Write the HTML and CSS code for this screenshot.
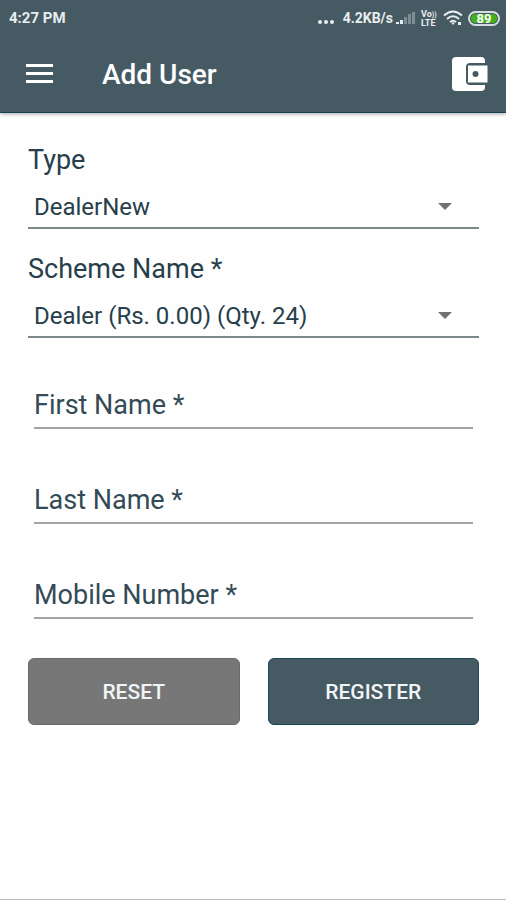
FILE: index.html
```html
<!DOCTYPE html>
<html lang="en">
<head>
<meta charset="utf-8">
<meta name="viewport" content="width=device-width, initial-scale=1">
<title>Add User</title>
<link rel="stylesheet" href="styles.css">
</head>
<body>
<header class="header">
  <div class="status">
    <span class="time">4:27 PM</span>
    <div class="indicators">
      <svg class="dots" width="18" height="16" viewBox="0 0 18 16" fill="currentColor" aria-hidden="true"><circle cx="3" cy="12" r="2"/><circle cx="9" cy="12" r="2"/><circle cx="15" cy="12" r="2"/></svg>
      <span class="speed">4.2KB/s</span>
      <svg class="signal" width="19" height="14" viewBox="0 0 19 14" fill="currentColor" aria-hidden="true"><path d="M0 11h3v2H0zM4 9h3v4H4z"/><path opacity=".35" d="M8 6h3v7H8zM12 3h3v10h-3zM16 1h3v12h-3z"/></svg>
      <span class="volte"><span>Vo<small>))</small></span><span>LTE</span></span>
      <svg class="wifi" width="20" height="16" viewBox="0 0 20 16" fill="none" stroke="currentColor" stroke-width="2" aria-hidden="true"><path d="M1 5.500Q10-2.500 19 5.500M4 9Q10 3.500 16 9M7 12Q10 9.500 13 12"/><path fill="currentColor" stroke="none" d="M8 12.500h4L10 15zM15 12h3v3h-3z"/></svg>
      <span class="battery">89</span>
    </div>
  </div>
  <div class="toolbar">
    <button class="icon-button" type="button" aria-label="Menu">
      <svg width="27" height="20" viewBox="0 0 27 20" fill="currentColor"><path d="M0 0h27v3H0zM0 8h27v3H0zM0 16h27v3H0z"/></svg>
    </button>
    <h1 class="title">Add User</h1>
    <button class="icon-button" type="button" aria-label="Wallet">
      <svg width="36" height="34" viewBox="0 0 36 34" fill="currentColor"><path d="M4 0H29Q33 0 33 4V6H18Q14 6 14 10V24Q14 28 18 28H33V30Q33 34 29 34H4Q0 34 0 30V4Q0 0 4 0Z"/><path fill-rule="evenodd" d="M16 8.500H35.500V25.500H16ZM23.500 14a3 3 0 1 0 0 6a3 3 0 1 0 0-6Z"/></svg>
    </button>
  </div>
</header>
<main class="main">
  <form class="form">
    <div class="field">
      <label class="label" for="type">Type</label>
      <div class="select-box">
        <select class="select" id="type"><option>DealerNew</option></select>
      </div>
    </div>
    <div class="field">
      <label class="label" for="scheme">Scheme Name *</label>
      <div class="select-box">
        <select class="select" id="scheme"><option>Dealer (Rs. 0.00) (Qty. 24)</option></select>
      </div>
    </div>
    <div class="inputs">
      <input class="input" type="text" placeholder="First Name *" aria-label="First Name">
      <input class="input" type="text" placeholder="Last Name *" aria-label="Last Name">
      <input class="input" type="tel" placeholder="Mobile Number *" aria-label="Mobile Number">
    </div>
    <div class="actions">
      <button class="button button-reset" type="reset">RESET</button>
      <button class="button button-register" type="button">REGISTER</button>
    </div>
  </form>
</main>
</body>
</html>
```
FILE: styles.css
```css
* {
  box-sizing: border-box;
}

body {
  display: flex;
  flex-direction: column;
  min-height: 100vh;
  margin: 0;
  background: #fefefe;
  border-bottom: 1px solid #bdbdbd;
  color: #263f4b;
  font-family: Roboto, "Liberation Sans", sans-serif;
}

.header {
  background: #465a63;
  border-bottom: 1px solid #174152;
  box-shadow: 0 1px 4px rgba(0, 0, 0, 0.35);
  color: #fff;
}

.status {
  display: flex;
  align-items: center;
  justify-content: space-between;
  height: 36px;
  padding: 0 6px 0 9px;
  color: #e8edef;
  font-weight: 700;
}

.time {
  font-size: 15px;
}

.indicators {
  display: flex;
  align-items: center;
}

.dots {
  margin-right: 8px;
}

.speed {
  font-size: 14px;
}

.signal {
  margin: 0 6px 0 3px;
}

.volte {
  display: flex;
  flex-direction: column;
  width: 16px;
  font-size: 9px;
  line-height: 8px;
}

.volte small {
  font-size: 7px;
}

.wifi {
  margin: 0 5px 0 6px;
}

.battery {
  width: 32px;
  height: 15px;
  border: 2px solid #d5dcdf;
  border-radius: 8px;
  background: #43b01c;
  box-shadow: inset 0 0 0 1px #465a63;
  color: #fff;
  font-size: 13px;
  line-height: 11px;
  text-align: center;
}

.toolbar {
  display: flex;
  align-items: center;
  height: 76px;
  padding: 0 18px 0 26px;
}

.title {
  flex: 1;
  margin: 0 0 0 49px;
  font-size: 28px;
  font-weight: 500;
}

.icon-button {
  display: flex;
  padding: 0;
  border: 0;
  background: none;
  color: #fff;
}

.form {
  padding: 32px 27px 32px 28px;
}

.field {
  margin-bottom: 25px;
}

.label {
  display: block;
  font-size: 27px;
  line-height: 31px;
}

.select-box {
  position: relative;
  padding-top: 11px;
  border-bottom: 2px solid #7b8788;
}

.select-box::after {
  position: absolute;
  top: 27px;
  right: 27px;
  border: 7px solid transparent;
  border-top-color: #717171;
  border-bottom-width: 0;
  content: "";
  pointer-events: none;
}

.select {
  display: block;
  width: 100%;
  height: 40px;
  padding: 0 48px 0 6px;
  border: 0;
  appearance: none;
  background: none;
  color: inherit;
  font: 24px Roboto, "Liberation Sans", sans-serif;
}

.inputs {
  display: grid;
  gap: 49px;
  padding: 20px 6px 0;
}

.input {
  width: 100%;
  height: 46px;
  padding: 0;
  border: 0;
  border-bottom: 2px solid #a3a3a3;
  border-radius: 0;
  background: none;
  color: inherit;
  font: 27px Roboto, "Liberation Sans", sans-serif;
}

.input::placeholder {
  color: #334b56;
  opacity: 1;
}

.actions {
  display: grid;
  grid-template-columns: 1fr 1fr;
  gap: 28px;
  margin-top: 39px;
}

.button {
  height: 67px;
  border: 1px solid;
  border-radius: 6px;
  color: #f2f5f6;
  font: 500 21px Roboto, "Liberation Sans", sans-serif;
}

.button-reset {
  border-color: #6a6a6a;
  background: #777;
}

.button-register {
  border-color: #1c4556;
  background: #465a63;
}
```
